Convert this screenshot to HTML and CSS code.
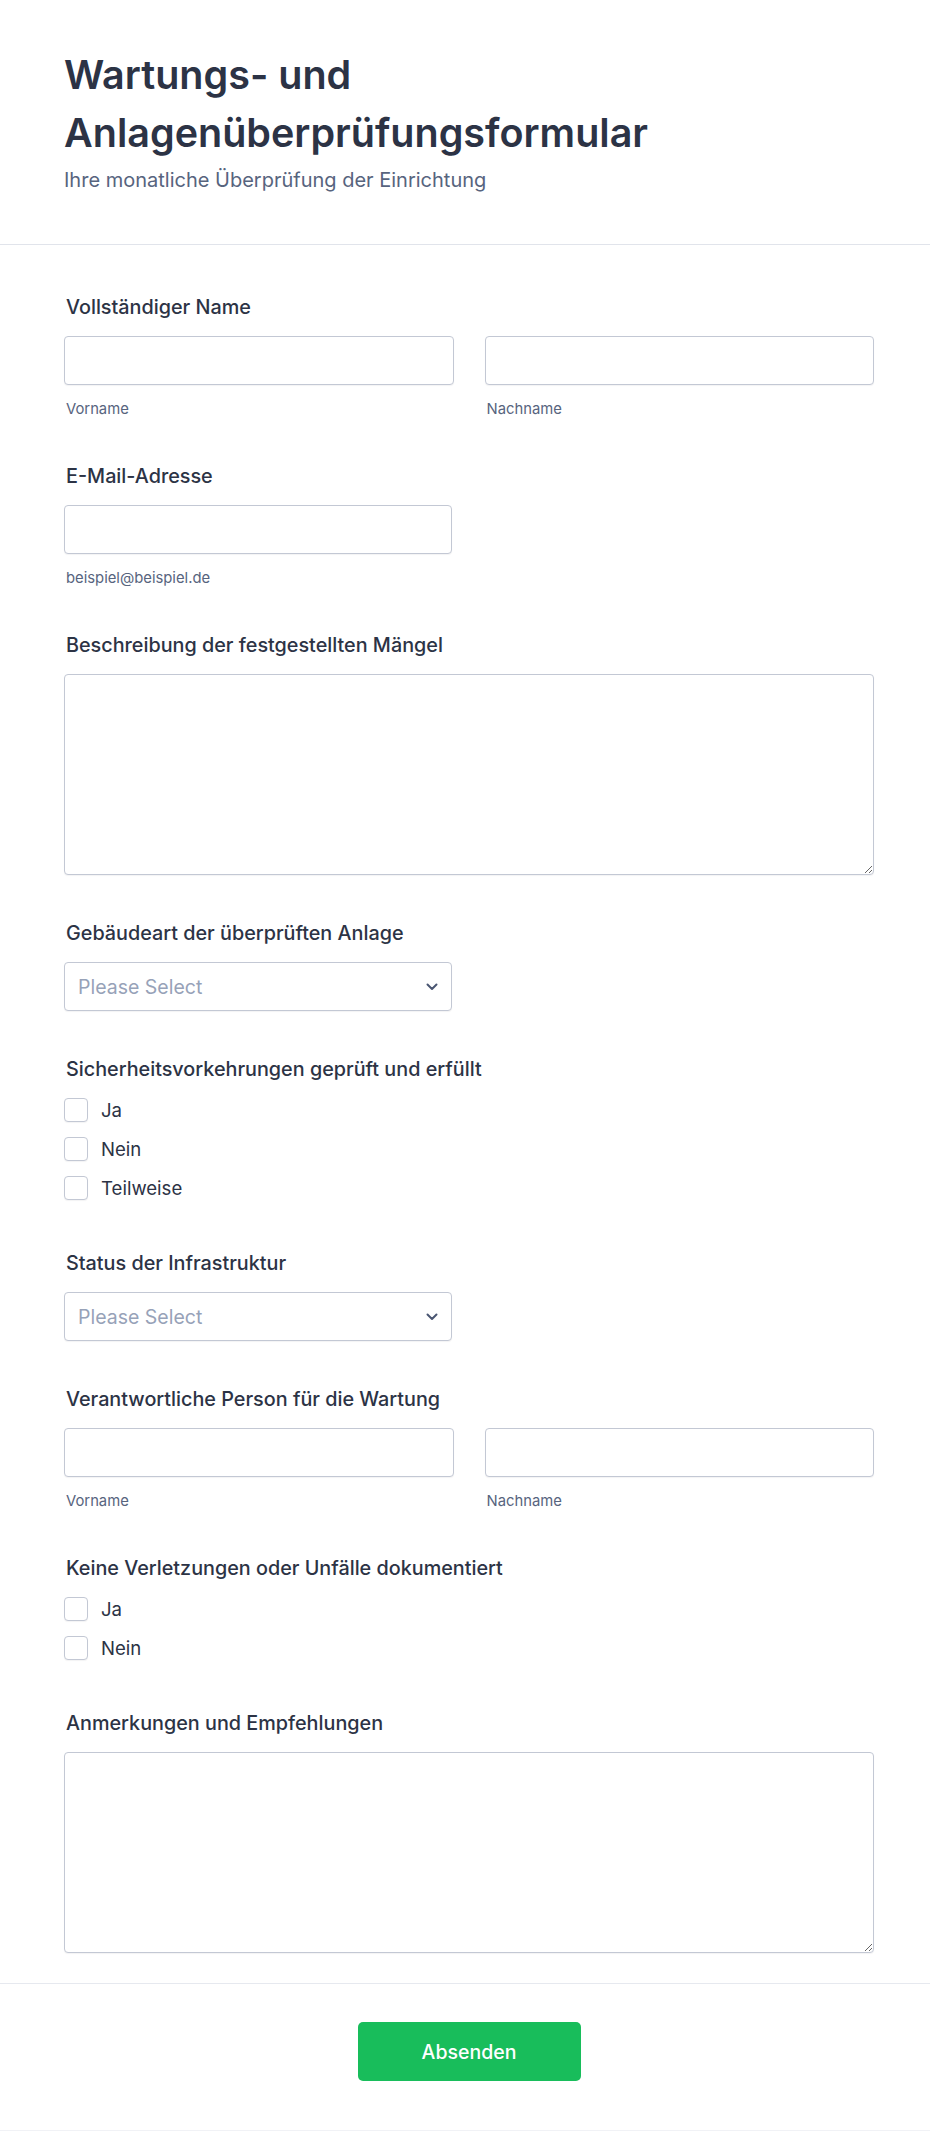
FILE: index.html
```html
<!DOCTYPE html>
<html lang="de">
<head>
<meta charset="utf-8">
<title>Wartungs- und Anlagenüberprüfungsformular</title>
<link rel="stylesheet" href="styles.css">
</head>
<body>
<form class="form">
  <header class="header">
    <h1 class="title">Wartungs- und Anlagenüberprüfungsformular</h1>
    <p class="subtitle">Ihre monatliche Überprüfung der Einrichtung</p>
  </header>

  <div class="body">
    <div class="field">
      <label class="label">Vollständiger Name</label>
      <div class="pair">
        <div class="pair-item">
          <input class="input" type="text">
          <span class="sublabel">Vorname</span>
        </div>
        <div class="pair-item">
          <input class="input" type="text">
          <span class="sublabel">Nachname</span>
        </div>
      </div>
    </div>

    <div class="field">
      <label class="label">E-Mail-Adresse</label>
      <div class="half">
        <input class="input" type="email">
        <span class="sublabel">beispiel@beispiel.de</span>
      </div>
    </div>

    <div class="field">
      <label class="label">Beschreibung der festgestellten Mängel</label>
      <textarea class="textarea"></textarea>
    </div>

    <div class="field">
      <label class="label">Gebäudeart der überprüften Anlage</label>
      <div class="select half">
        <span class="placeholder">Please Select</span>
        <svg class="chevron" width="12" height="8" viewBox="0 0 12 8"><path d="M1.5 1.5 L6 6 L10.5 1.5" fill="none" stroke="#4a5672" stroke-width="2" stroke-linecap="round" stroke-linejoin="round"/></svg>
      </div>
    </div>

    <div class="field field-checks">
      <label class="label">Sicherheitsvorkehrungen geprüft und erfüllt</label>
      <div class="checks">
        <label class="check"><input type="checkbox" class="box"><span>Ja</span></label>
        <label class="check"><input type="checkbox" class="box"><span>Nein</span></label>
        <label class="check"><input type="checkbox" class="box"><span>Teilweise</span></label>
      </div>
    </div>

    <div class="field">
      <label class="label">Status der Infrastruktur</label>
      <div class="select half">
        <span class="placeholder">Please Select</span>
        <svg class="chevron" width="12" height="8" viewBox="0 0 12 8"><path d="M1.5 1.5 L6 6 L10.5 1.5" fill="none" stroke="#4a5672" stroke-width="2" stroke-linecap="round" stroke-linejoin="round"/></svg>
      </div>
    </div>

    <div class="field">
      <label class="label">Verantwortliche Person für die Wartung</label>
      <div class="pair">
        <div class="pair-item">
          <input class="input" type="text">
          <span class="sublabel">Vorname</span>
        </div>
        <div class="pair-item">
          <input class="input" type="text">
          <span class="sublabel">Nachname</span>
        </div>
      </div>
    </div>

    <div class="field field-checks">
      <label class="label">Keine Verletzungen oder Unfälle dokumentiert</label>
      <div class="checks">
        <label class="check"><input type="checkbox" class="box"><span>Ja</span></label>
        <label class="check"><input type="checkbox" class="box"><span>Nein</span></label>
      </div>
    </div>

    <div class="field field-last">
      <label class="label">Anmerkungen und Empfehlungen</label>
      <textarea class="textarea"></textarea>
    </div>
  </div>

  <footer class="footer">
    <button type="button" class="submit">Absenden</button>
  </footer>
</form>
</body>
</html>
```
FILE: styles.css
```css
* { box-sizing: border-box; }

body {
  margin: 0;
  background: #ffffff;
  font-family: Inter, "Noto Sans", "Liberation Sans", sans-serif;
  color: #2c3345;
}

.form {
  width: 930px;
}

.header {
  padding: 46px 64px 51px;
  border-bottom: 1px solid #e1e4eb;
}

.title {
  margin: 0;
  font-size: 39.5px;
  line-height: 58px;
  font-weight: 600;
  color: #2c3345;
}

.subtitle {
  margin: 5px 0 0;
  font-size: 20px;
  line-height: 26px;
  color: #57647e;
}

.body {
  padding: 50px 56px 0 64px;
}

.field {
  display: flex;
  flex-direction: column;
  margin-bottom: 46px;
}

.field-checks {
  margin-bottom: 51px;
}

.field-last {
  margin-bottom: 30px;
}

.label {
  display: block;
  font-size: 19.8px;
  line-height: 24px;
  font-weight: 500;
  color: #2c3345;
  padding-left: 2px;
  margin-bottom: 17px;
}

.pair {
  display: flex;
  gap: 31px;
}

.pair-item {
  flex: 1;
  display: flex;
  flex-direction: column;
}

.half {
  width: 388px;
  display: flex;
  flex-direction: column;
}

.input {
  height: 49px;
  width: 100%;
  border: 1px solid #c3c8d4;
  border-radius: 4px;
  background: #fff;
  box-shadow: 0 1px 1px rgba(43, 52, 69, 0.06);
  font: inherit;
  margin: 0;
}

.sublabel {
  margin-top: 15px;
  padding-left: 2px;
  font-size: 14.8px;
  line-height: 18px;
  color: #57647e;
}

.textarea {
  display: block;
  width: 100%;
  height: 201px;
  border: 1px solid #c3c8d4;
  border-radius: 4px;
  box-shadow: 0 1px 1px rgba(43, 52, 69, 0.06);
  font: inherit;
  margin: 0;
  resize: vertical;
}

.select {
  height: 49px;
  flex-direction: row;
  align-items: center;
  justify-content: space-between;
  padding: 0 13px 0 13px;
  border: 1px solid #c3c8d4;
  border-radius: 4px;
  box-shadow: 0 1px 1px rgba(43, 52, 69, 0.06);
  background: #fff;
}

.placeholder {
  font-size: 19.5px;
  color: #97a2b8;
}

.chevron {
  display: block;
}

.checks {
  display: flex;
  flex-direction: column;
  gap: 15px;
}

.check {
  display: flex;
  align-items: center;
  gap: 13px;
  font-size: 18.6px;
  line-height: 24px;
  color: #2c3345;
}

.box {
  appearance: none;
  -webkit-appearance: none;
  margin: 0;
  width: 24px;
  height: 24px;
  border: 1px solid #c3c8d4;
  border-radius: 4px;
  background: #fff;
  box-shadow: 0 1px 1px rgba(43, 52, 69, 0.06);
}

.footer {
  border-top: 1px solid #e6e9ef;
  border-bottom: 1px solid #f1f2f6;
  padding: 38px 56px 49px 64px;
  display: flex;
  justify-content: center;
}

.submit {
  width: 223px;
  height: 59px;
  border: none;
  border-radius: 5px;
  background: #18bd5b;
  color: #ffffff;
  font-family: Inter, "Noto Sans", sans-serif;
  font-size: 19.5px;
  font-weight: 500;
}
```
